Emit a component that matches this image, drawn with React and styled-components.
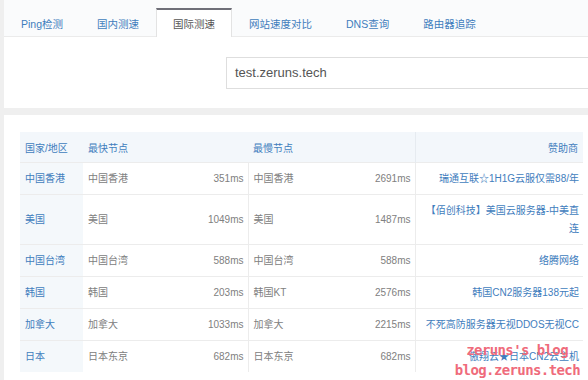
import React from 'react';
import styled, { createGlobalStyle } from 'styled-components';

const GlobalStyle = createGlobalStyle`
  html, body {
    margin: 0;
    padding: 0;
    overflow: hidden;
    background: #efefef;
    font-family: "Liberation Sans", "Noto Sans CJK SC", sans-serif;
  }
`;

const Page = styled.div`
  position: relative;
  width: 596px;
  height: 380px;
  margin-left: 4px;
  display: flex;
  flex-direction: column;
  gap: 7px;
`;

const Panel = styled.div`
  background: #fff;
`;

const TabBar = styled.div`
  display: flex;
  padding-top: 8px;
  background: #fafbfc;
  border-bottom: 1px solid #ebebeb;
`;

const Tab = styled.div`
  height: 27px;
  padding: 0 16px;
  display: flex;
  align-items: center;
  font-size: 10.5px;
  color: ${({ active }) => (active ? '#555' : '#3f7dbd')};
  background: ${({ active }) => (active ? '#fff' : 'transparent')};
  border-top: 2px solid ${({ active }) => (active ? '#6f6f78' : 'transparent')};
  border-left: 1px solid ${({ active }) => (active ? '#e3e3e3' : 'transparent')};
  border-right: 1px solid ${({ active }) => (active ? '#e3e3e3' : 'transparent')};
  margin-bottom: -1px;
`;

const Form = styled.div`
  height: 71px;
  display: flex;
  align-items: center;
  padding-left: 222px;
`;

const Input = styled.div`
  width: 380px;
  height: 30px;
  border: 1px solid #dedede;
  display: flex;
  align-items: center;
  padding-left: 8px;
  font-size: 13px;
  color: #555;
`;

const ResultPanel = styled(Panel)`
  flex: 1;
  padding: 17px 16px 0;
`;

const Table = styled.table`
  width: 563px;
  border-collapse: collapse;
  table-layout: fixed;
  font-size: 10px;
`;

const Th = styled.th`
  height: 30px;
  padding: 0 5px;
  font-weight: normal;
  color: #3f7dbd;
  background: #f3f7fb;
  text-align: ${({ align }) => align || 'left'};
  border-left: ${({ divide }) => (divide ? '1px solid #e6ebf0' : 'none')};
`;

const Td = styled.td`
  padding: 7px 4px 6px 5px;
  line-height: 18px;
  color: ${({ link }) => (link ? '#3f7dbd' : '#808080')};
  background: ${({ head }) => (head ? '#f4f8fb' : '#fff')};
  text-align: ${({ align }) => align || 'left'};
  border-top: 1px solid #ececec;
  border-left: ${({ divide }) => (divide ? '1px solid #ececec' : 'none')};
  white-space: ${({ wrap }) => (wrap ? 'normal' : 'nowrap')};
`;

const Watermark = styled.div`
  position: absolute;
  right: 20px;
  top: 340px;
  display: flex;
  flex-direction: column;
  align-items: flex-end;
  font-family: "DejaVu Sans Mono", monospace;
  font-weight: bold;
  font-size: 14px;
  letter-spacing: -0.6px;
  line-height: 20px;
  color: #ef6b7b;
`;

const MarkLine = styled.span`
  padding-right: ${({ shift }) => shift || 0}px;
`;

const tabs = ['Ping检测', '国内测速', '国际测速', '网站速度对比', 'DNS查询', '路由器追踪'];

const rows = [
  ['中国香港', '中国香港', '351ms', '中国香港', '2691ms', '瑞通互联☆1H1G云服仅需88/年'],
  ['美国', '美国', '1049ms', '美国', '1487ms', '【佰创科技】美国云服务器-中美直连'],
  ['中国台湾', '中国台湾', '588ms', '中国台湾', '588ms', '络腾网络'],
  ['韩国', '韩国', '203ms', '韩国KT', '2576ms', '韩国CN2服务器138元起'],
  ['加拿大', '加拿大', '1033ms', '加拿大', '2215ms', '不死高防服务器无视DDOS无视CC'],
  ['日本', '日本东京', '682ms', '日本东京', '682ms', '傲翔云★日本CN2云主机'],
];

const App = () => (
  <Page>
    <GlobalStyle />
    <Panel>
      <TabBar>
        {tabs.map((t) => (
          <Tab key={t} active={t === '国际测速'}>
            {t}
          </Tab>
        ))}
      </TabBar>
      <Form>
        <Input>test.zeruns.tech</Input>
      </Form>
    </Panel>
    <ResultPanel>
      <Table>
        <colgroup>
          <col style={{ width: 63 }} />
          <col style={{ width: 100 }} />
          <col style={{ width: 65 }} />
          <col style={{ width: 100 }} />
          <col style={{ width: 67 }} />
          <col style={{ width: 168 }} />
        </colgroup>
        <thead>
          <tr>
            <Th>国家/地区</Th>
            <Th colSpan={2}>最快节点</Th>
            <Th colSpan={2}>最慢节点</Th>
            <Th align="right" divide>
              赞助商
            </Th>
          </tr>
        </thead>
        <tbody>
          {rows.map(([region, fast, fastMs, slow, slowMs, sponsor]) => (
            <tr key={region}>
              <Td head link>
                {region}
              </Td>
              <Td>{fast}</Td>
              <Td align="right">{fastMs}</Td>
              <Td divide>{slow}</Td>
              <Td align="right">{slowMs}</Td>
              <Td divide link wrap align="right">
                {sponsor}
              </Td>
            </tr>
          ))}
        </tbody>
      </Table>
    </ResultPanel>
    <Watermark>
      <MarkLine shift={12}>zeruns's blog</MarkLine>
      <MarkLine>blog.zeruns.tech</MarkLine>
    </Watermark>
  </Page>
);

export default App;
